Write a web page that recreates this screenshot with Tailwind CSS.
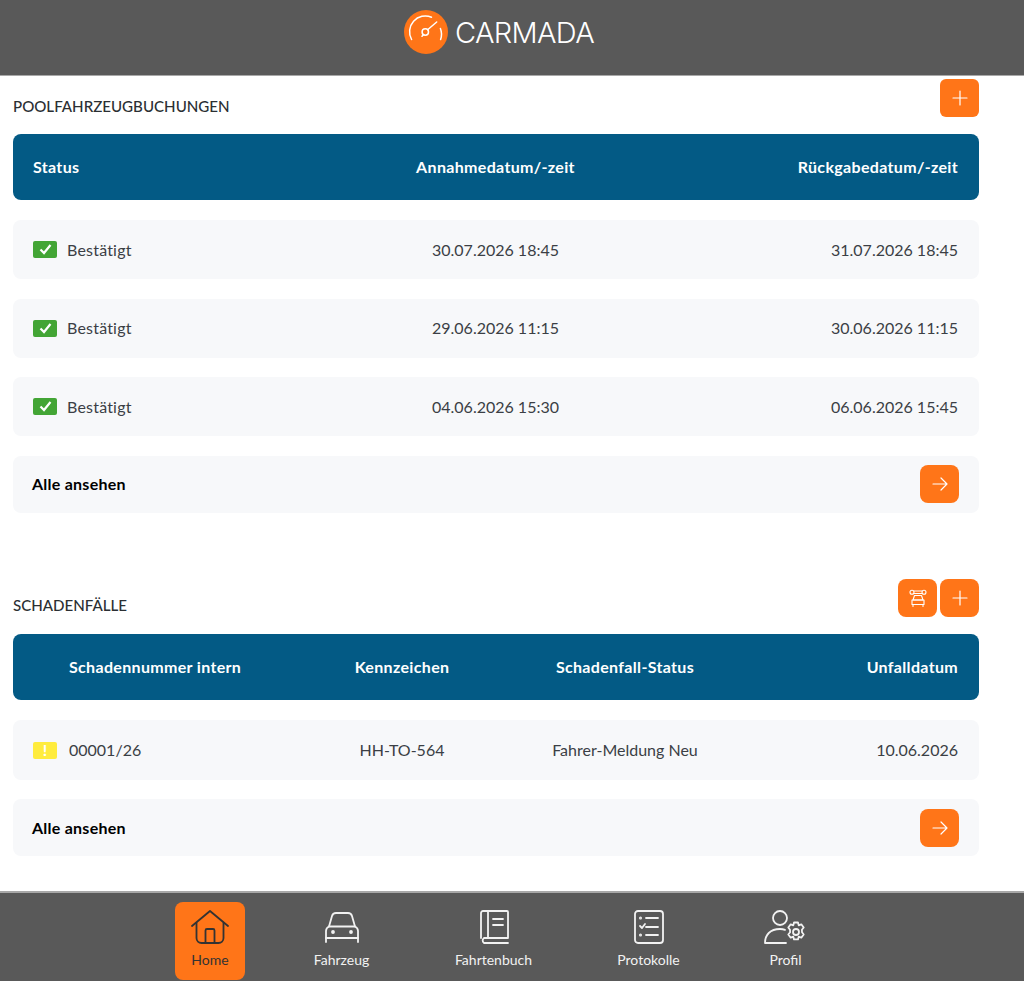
<!DOCTYPE html>
<html lang="de">
<head>
  <meta charset="UTF-8">
  <meta name="viewport" content="width=device-width, initial-scale=1.0">
  <title>Carmada</title>
  <script src="https://cdn.jsdelivr.net/npm/@tailwindcss/browser@4"></script>
</head>
<body class="bg-white font-['Lato',sans-serif] text-[#3b3f45] h-[981px] overflow-hidden flex flex-col">

  <!-- Header -->
  <header class="h-[76px] shrink-0 bg-[#595959] border-b border-[#a8a8a8] flex items-center justify-center gap-[7px] pb-[11px] pr-[26px]">
    <svg class="w-[44px] h-[44px]" viewBox="0 0 44 44" fill="none" stroke="#fff" stroke-width="1.5" stroke-linecap="round">
      <circle cx="22" cy="22" r="22" fill="#ff7518" stroke="none"/>
      <path d="M7.600 29.500 A15.800 15.800 0 0 1 27.500 7.200"/>
      <path d="M36.400 18.500 A15.800 15.800 0 0 1 36.600 29.500"/>
      <circle cx="21.300" cy="22" r="3.200"/>
      <path d="M23.600 19.700 L32.700 12"/>
      <path d="M19.500 24.500 L18 26.300"/>
    </svg>
    <span class="font-['Inter',sans-serif] font-light text-[29px] leading-none text-white tracking-[-0.65px]">CARMADA</span>
  </header>

  <main class="flex-1 w-[966px] ml-[13px]">
    <!-- Poolfahrzeugbuchungen -->
    <div class="flex items-start justify-between h-[58px] pt-[3px]">
      <h2 class="text-[15.1px] font-medium text-[#2b2f33] mt-[16px]">POOLFAHRZEUGBUCHUNGEN</h2>
      <button class="w-[39px] h-[38px] rounded-[6px] bg-[#ff7518] flex items-center justify-center">
        <svg class="w-[16px] h-[16px]" viewBox="0 0 16 16" stroke="#fff" stroke-width="1.2" stroke-linecap="round"><path d="M8 1v14M1 8h14"/></svg>
      </button>
    </div>

    <div class="grid grid-cols-3 items-center h-[66px] pl-[20px] pr-[21px] rounded-[8px] bg-[#035a85] text-white text-[16px] font-bold tracking-[0.33px]">
      <div>Status</div>
      <div class="text-center">Annahmedatum/-zeit</div>
      <div class="text-right">Rückgabedatum/-zeit</div>
    </div>

    <div class="grid grid-cols-3 items-center h-[59px] mt-[20px] pl-[20px] pr-[21px] rounded-[8px] bg-[#f7f8fa] text-[16px]">
      <div class="flex items-center gap-[10px] tracking-[0.2px]">
        <span class="w-[24px] h-[17px] rounded-[2px] bg-[#43a535] flex items-center justify-center">
          <svg class="w-[13px] h-[11px]" viewBox="0 0 13 11" fill="none" stroke="#fff" stroke-width="2.2"><path d="M1.500 5.500l3.500 3.500 6.500-8"/></svg>
        </span>
        Bestätigt
      </div>
      <div class="text-center">30.07.2026 18:45</div>
      <div class="text-right">31.07.2026 18:45</div>
    </div>

    <div class="grid grid-cols-3 items-center h-[59px] mt-[20px] pl-[20px] pr-[21px] pb-[1px] rounded-[8px] bg-[#f7f8fa] text-[16px]">
      <div class="flex items-center gap-[10px] tracking-[0.2px]">
        <span class="w-[24px] h-[17px] rounded-[2px] bg-[#43a535] flex items-center justify-center">
          <svg class="w-[13px] h-[11px]" viewBox="0 0 13 11" fill="none" stroke="#fff" stroke-width="2.2"><path d="M1.500 5.500l3.500 3.500 6.500-8"/></svg>
        </span>
        Bestätigt
      </div>
      <div class="text-center">29.06.2026 11:15</div>
      <div class="text-right">30.06.2026 11:15</div>
    </div>

    <div class="grid grid-cols-3 items-center h-[59px] mt-[19px] pl-[20px] pr-[21px] rounded-[8px] bg-[#f7f8fa] text-[16px]">
      <div class="flex items-center gap-[10px] tracking-[0.2px]">
        <span class="w-[24px] h-[17px] rounded-[2px] bg-[#43a535] flex items-center justify-center">
          <svg class="w-[13px] h-[11px]" viewBox="0 0 13 11" fill="none" stroke="#fff" stroke-width="2.2"><path d="M1.500 5.500l3.500 3.500 6.500-8"/></svg>
        </span>
        Bestätigt
      </div>
      <div class="text-center">04.06.2026 15:30</div>
      <div class="text-right">06.06.2026 15:45</div>
    </div>

    <div class="flex items-center justify-between h-[57px] mt-[20px] pl-[19px] pr-[20px] pb-[1px] rounded-[8px] bg-[#f7f8fa]">
      <span class="text-[16px] font-bold text-black tracking-[0.25px]">Alle ansehen</span>
      <button class="w-[39px] h-[38px] rounded-[8px] bg-[#ff7518] flex items-center justify-center">
        <svg class="w-[16px] h-[14px]" viewBox="0 0 16 14" fill="none" stroke="#fff" stroke-width="1.2" stroke-linecap="round" stroke-linejoin="round"><path d="M1 7h14M9 1l6 6-6 6"/></svg>
      </button>
    </div>

    <!-- Schadenfaelle -->
    <div class="flex items-center justify-between h-[39px] mt-[65px]">
      <h2 class="text-[15.1px] font-medium text-[#2b2f33] mt-[16px]">SCHADENFÄLLE</h2>
      <div class="flex gap-[3px]">
        <button class="w-[39px] h-[38px] rounded-[8px] bg-[#ff7518] flex items-center justify-center">
          <svg class="w-[18px] h-[18px]" viewBox="0 0 18 18" fill="none" stroke="#fff" stroke-width="1.1" stroke-linecap="round" stroke-linejoin="round">
            <circle cx="3" cy="3.200" r="2"/>
            <circle cx="15" cy="3.200" r="2"/>
            <path d="M5 2h8M5 4.500h8"/>
            <path d="M5.500 6.500h7l1.500 4.500H4z"/>
            <path d="M3 11h12v4.500H3z"/>
            <path d="M4 15.500v2M14 15.500v2"/>
          </svg>
        </button>
        <button class="w-[39px] h-[38px] rounded-[8px] bg-[#ff7518] flex items-center justify-center">
          <svg class="w-[16px] h-[16px]" viewBox="0 0 16 16" stroke="#fff" stroke-width="1.2" stroke-linecap="round"><path d="M8 1v14M1 8h14"/></svg>
        </button>
      </div>
    </div>

    <div class="grid grid-cols-[296px_146px_300px_1fr] items-center h-[66px] mt-[17px] pl-[20px] pr-[21px] rounded-[8px] bg-[#035a85] text-white text-[16px] font-bold tracking-[0.33px]">
      <div class="pl-[36px]">Schadennummer intern</div>
      <div class="text-center">Kennzeichen</div>
      <div class="text-center">Schadenfall-Status</div>
      <div class="text-right">Unfalldatum</div>
    </div>

    <div class="grid grid-cols-[296px_146px_300px_1fr] items-center h-[60px] mt-[20px] pl-[20px] pr-[21px] rounded-[8px] bg-[#f7f8fa] text-[16px]">
      <div class="flex items-center gap-[12px]">
        <span class="w-[24px] h-[17px] rounded-[2px] bg-[#ffec3d] flex items-center justify-center text-white text-[16px] font-bold leading-none">!</span>
        00001/26
      </div>
      <div class="text-center">HH-TO-564</div>
      <div class="text-center">Fahrer-Meldung Neu</div>
      <div class="text-right">10.06.2026</div>
    </div>

    <div class="flex items-center justify-between h-[57px] mt-[19px] pl-[19px] pr-[20px] rounded-[8px] bg-[#f7f8fa]">
      <span class="text-[16px] font-bold text-black tracking-[0.25px]">Alle ansehen</span>
      <button class="w-[39px] h-[38px] rounded-[8px] bg-[#ff7518] flex items-center justify-center">
        <svg class="w-[16px] h-[14px]" viewBox="0 0 16 14" fill="none" stroke="#fff" stroke-width="1.2" stroke-linecap="round" stroke-linejoin="round"><path d="M1 7h14M9 1l6 6-6 6"/></svg>
      </button>
    </div>
  </main>

  <!-- Bottom navigation -->
  <nav class="h-[90px] shrink-0 bg-[#595959] border-t-2 border-[#a8a8a8] flex justify-center text-[14px] text-[#f2f2f2]">
    <div class="w-[70px] h-[78px] mt-[9px] ml-[-10px] rounded-[8px] bg-[#ff7518] text-[#333] flex flex-col items-center pt-[8px]">
      <svg class="w-[38px] h-[34px]" viewBox="0 0 38 34" fill="none" stroke="#333" stroke-width="1.8" stroke-linecap="round" stroke-linejoin="round">
        <path d="M1 16 19 1l18 15"/>
        <path d="M5.500 13v15a5 5 0 0 0 5 5h17a5 5 0 0 0 5-5V13"/>
        <path d="M14.500 33V20.500a1.500 1.500 0 0 1 1.500-1.500h6a1.500 1.500 0 0 1 1.500 1.500V33"/>
      </svg>
      <span class="mt-[5px]">Home</span>
    </div>
    <div class="w-[107px] ml-[43px] flex flex-col items-center pt-[19px]">
      <svg class="w-[36px] h-[32px]" viewBox="0 0 36 32" fill="none" stroke="#f2f2f2" stroke-width="1.8" stroke-linecap="round" stroke-linejoin="round">
        <path d="M2 30V19c0-2 1-3.500 3-4.500L8 4c.6-2 2-3 4-3h12c2 0 3.400 1 4 3l3 10.500c2 1 3 2.500 3 4.500v11"/>
        <path d="M5 14.500h26M2 26h32"/>
        <circle cx="9" cy="20" r="1" fill="#f2f2f2"/>
        <circle cx="27" cy="20" r="1" fill="#f2f2f2"/>
      </svg>
      <span class="mt-[5px]">Fahrzeug</span>
    </div>
    <div class="w-[107px] ml-[45px] flex flex-col items-center pt-[17px]">
      <svg class="w-[30px] h-[34px]" viewBox="0 0 30 34" fill="none" stroke="#f2f2f2" stroke-width="1.8" stroke-linecap="round" stroke-linejoin="round">
        <path d="M2 28V3a2 2 0 0 1 2-2h24a1 1 0 0 1 1 1v26H5a3 3 0 0 0 0 5h24"/>
        <path d="M9 1v27M14 9h10M14 15h10"/>
      </svg>
      <span class="mt-[5px]">Fahrtenbuch</span>
    </div>
    <div class="w-[107px] ml-[48px] flex flex-col items-center pt-[17px]">
      <svg class="w-[30px] h-[34px]" viewBox="0 0 30 34" fill="none" stroke="#f2f2f2" stroke-width="1.8" stroke-linecap="round" stroke-linejoin="round">
        <rect x="1" y="1" width="28" height="32" rx="3"/>
        <path d="M12 8h12M12 17h12M12 25h12M6 16l2 2 3-4"/>
        <circle cx="6.500" cy="8" r=".6"/>
        <circle cx="6.500" cy="25" r=".6"/>
      </svg>
      <span class="mt-[5px]">Protokolle</span>
    </div>
    <div class="w-[107px] ml-[30px] flex flex-col items-center pt-[17px]">
      <svg class="w-[44px] h-[34px]" viewBox="0 0 44 34" fill="none" stroke="#f2f2f2" stroke-width="1.8" stroke-linecap="round" stroke-linejoin="round">
        <circle cx="16" cy="8" r="7"/>
        <path d="M1 33c0-8 5-14 15-14 2 0 3.500.2 5 .8M1 33h21"/>
        <circle cx="32" cy="22" r="3"/>
        <path d="M30 12.500h4l.7 2.800 2.600-1 2.400 3.200-1.800 2.200.1 2.600 1.700 2.200-2.400 3.200-2.600-1-.7 2.700h-4l-.7-2.700-2.600 1-2.400-3.200 1.800-2.200-.1-2.600-1.700-2.200 2.400-3.200 2.600 1z"/>
      </svg>
      <span class="mt-[5px]">Profil</span>
    </div>
  </nav>

</body>
</html>
